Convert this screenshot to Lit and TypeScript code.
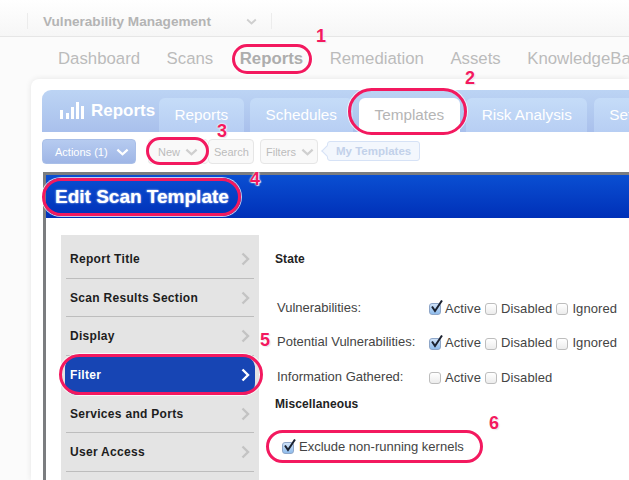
import { LitElement, html, css, svg } from 'lit';
import { customElement } from 'lit/decorators.js';

const NAV = ['Dashboard', 'Scans', 'Reports', 'Remediation', 'Assets', 'KnowledgeBase'];
const TABS = ['Reports', 'Schedules', 'Templates', 'Risk Analysis', 'Setup'];
const SIDE = ['Report Title', 'Scan Results Section', 'Display', 'Filter', 'Services and Ports', 'User Access'];
const STATES = [
  { label: 'Vulnerabilities:', opts: [['Active', true], ['Disabled', false], ['Ignored', false]] },
  { label: 'Potential Vulnerabilities:', opts: [['Active', true], ['Disabled', false], ['Ignored', false]] },
  { label: 'Information Gathered:', opts: [['Active', false], ['Disabled', false]] },
] as { label: string; opts: [string, boolean][] }[];

// annotation rings and numbers sit over the page, x/y taken from the screenshot
const RINGS = [
  [232, 44, 80, 30],
  [348, 88, 119, 47],
  [146, 137, 63, 28],
  [42, 178, 199, 38],
  [59, 354, 204, 41],
  [266, 430, 217, 33],
];
const NUMS = [
  ['1', 321, 36],
  ['2', 470, 78],
  ['3', 222, 131],
  ['4', 255, 179],
  ['5', 265, 340],
  ['6', 494, 423],
] as [string, number, number][];

const chevron = (cls: string) => html`<svg class=${cls} viewBox="0 0 14 8"><path d="M1.5 1.5 7 6.5l5.5-5" /></svg>`;
const arrow = () => html`<svg class="arrow" viewBox="0 0 9 14"><path d="M1.5 1.5 7 7l-5.5 5.5" /></svg>`;
const tick = svg`<path d="M3 6.5 6 11 13 0.5" />`;

const box = (on: boolean) => html`<span class="box ${on ? 'on' : ''}">
  ${on ? html`<svg viewBox="0 0 14 13">${tick}</svg>` : ''}
</span>`;

@customElement('app-root')
export class AppRoot extends LitElement {
  static styles = css`
    :host {
      display: block;
      position: relative;
      width: 629px;
      height: 480px;
      overflow: hidden;
      background: #fbfbfb;
      font-family: 'Liberation Sans', Arial, sans-serif;
    }
    .top {
      height: 37px;
      padding-top: 6px;
      box-sizing: border-box;
      display: flex;
      align-items: center;
      background: linear-gradient(#fff, #f6f6f6);
      border-bottom: 1px solid #e6e6e6;
    }
    .crumb {
      margin-left: 27px;
      width: 245px;
      height: 16px;
      box-sizing: border-box;
      display: flex;
      align-items: center;
      justify-content: space-between;
      padding: 0 14px 0 15px;
      border-left: 1px solid #ececec;
      border-right: 1px solid #ececec;
      color: #b4b4b4;
      font-size: 13.6px;
      font-weight: bold;
      white-space: nowrap;
    }
    .crumb-arrow {
      flex: none;
      width: 11px;
      height: 7px;
      fill: none;
      stroke: #cfcfcf;
      stroke-width: 2.4;
    }
    .nav {
      display: flex;
      gap: 26.5px;
      height: 42px;
      box-sizing: border-box;
      padding: 2px 0 0 58px;
      align-items: center;
      color: #bbb;
      font-size: 16.8px;
      white-space: nowrap;
    }
    .nav .sel {
      font-weight: bold;
      color: #adadad;
    }
    .card {
      margin-left: 31px;
      padding: 11px 0 0 11px;
      height: 401px;
      box-sizing: border-box;
      background: #fff;
      border-top-left-radius: 8px;
      box-shadow: 0 0 6px rgba(0, 0, 0, 0.09);
    }
    .head {
      height: 42px;
      box-sizing: border-box;
      display: flex;
      align-items: flex-end;
      background: linear-gradient(#bcd4f4, #a9c0ec);
      border-top-left-radius: 9px;
    }
    .brand {
      flex: none;
      width: 117px;
      height: 42px;
      box-sizing: border-box;
      padding: 11px 0 0 18px;
      display: flex;
      gap: 6px;
      color: #fff;
      font-size: 17px;
      font-weight: bold;
    }
    .brand svg {
      flex: none;
      width: 25px;
      height: 19px;
      fill: #fff;
    }
    .tabs {
      flex: none;
      display: flex;
      gap: 6.5px;
    }
    .tab {
      height: 34px;
      box-sizing: border-box;
      padding: 8px 15.5px 0;
      color: #fff;
      font-size: 15.3px;
      white-space: nowrap;
      background: linear-gradient(#c5dcf8, #b7cef3);
      border-radius: 6px 6px 0 0;
    }
    .tab.sel {
      background: #fff;
      color: #b5b5b5;
    }
    .tools {
      height: 40px;
      box-sizing: border-box;
      padding-top: 7px;
      display: flex;
      align-items: flex-start;
    }
    .btn {
      height: 25px;
      box-sizing: border-box;
      display: flex;
      align-items: center;
      gap: 5px;
      padding: 0 5px;
      border: 1px solid #e6e6e6;
      border-radius: 4px;
      background: #f9f9f9;
      color: #bcbcbc;
      font-size: 11px;
      white-space: nowrap;
    }
    .btn-arrow {
      flex: none;
      width: 13px;
      height: 8px;
      fill: none;
      stroke: #cfcfcf;
      stroke-width: 2.4;
    }
    .btn.primary {
      width: 94px;
      padding: 0 6px 0 12px;
      justify-content: space-between;
      margin-right: 12px;
      color: #fff;
      background: linear-gradient(#b6cbf0, #9fb6e6);
      border-color: #a9bfe8;
    }
    .btn.primary .btn-arrow {
      stroke: #fff;
    }
    .new {
      width: 60px;
      padding-left: 9px;
      border-right: 0;
    }
    .search {
      width: 46px;
      margin-right: 6px;
    }
    .filters {
      width: 58px;
      margin-right: 9px;
    }
    .tag {
      position: relative;
      height: 20px;
      box-sizing: border-box;
      padding: 0 8px;
      margin-top: 2px;
      display: flex;
      align-items: center;
      border: 1px solid #d6e2f6;
      border-radius: 3px;
      background: #f3f7fd;
      color: #c2d1ea;
      font-size: 11.5px;
      font-weight: bold;
      white-space: nowrap;
    }
    .tag::before {
      content: '';
      position: absolute;
      left: -5px;
      top: 5px;
      width: 7px;
      height: 7px;
      background: #f3f7fd;
      border-left: 1px solid #d6e2f6;
      border-bottom: 1px solid #d6e2f6;
      transform: rotate(45deg);
    }
    .dialog {
      margin-left: 1px;
      height: 320px;
      background: #fff;
      border: solid #7b7d80;
      border-width: 3px 0 0 3px;
    }
    .title {
      height: 43px;
      box-sizing: border-box;
      padding: 11px 0 0 9px;
      background: linear-gradient(#0a4fd2, #0030b8);
      color: #fff;
      font-size: 19px;
      font-weight: bold;
      text-shadow: 0 0 2px #dfe8ff;
    }
    .body {
      display: flex;
      padding: 17px 0 0 15px;
    }
    .side {
      flex: none;
      width: 198px;
      height: 260px;
      padding: 5px 5px 0;
      box-sizing: border-box;
      background: #e4e4e4;
    }
    .item {
      height: 38.7px;
      box-sizing: border-box;
      display: flex;
      align-items: center;
      justify-content: space-between;
      padding: 0 4px 0 4px;
      border-bottom: 1px solid #bdbdbd;
      color: #1d1d1d;
      font-size: 12px;
      font-weight: bold;
      letter-spacing: 0.3px;
    }
    .item.sel {
      margin: 0 -1px;
      padding: 0 5px 0 5px;
      background: #1745b4;
      color: #fff;
      border-bottom-color: #1745b4;
      border-radius: 12px;
    }
    .arrow {
      width: 9px;
      height: 14px;
      fill: none;
      stroke: #c3c3c3;
      stroke-width: 2.4;
    }
    .item.sel .arrow {
      stroke: #fff;
    }
    .form {
      padding: 17px 0 0 16px;
      color: #444;
      font-size: 13px;
      white-space: nowrap;
    }
    h4 {
      margin: 0;
      font-size: 12px;
      line-height: 14px;
      letter-spacing: 0.1px;
      color: #222;
    }
    .state {
      display: flex;
      flex-direction: column;
      gap: 18.5px;
      margin: 33.5px 0 12.5px;
    }
    .row {
      display: grid;
      grid-template-columns: 152px auto;
      padding-left: 2px;
      line-height: 15px;
    }
    .opts {
      display: flex;
      gap: 4px;
      margin-top: 1px;
      letter-spacing: 0.1px;
    }
    .opt {
      display: flex;
      align-items: center;
      gap: 4px;
    }
    .box {
      position: relative;
      flex: none;
      width: 12px;
      height: 12px;
      margin-top: 2px;
      border: 1px solid #bdbdbd;
      border-radius: 3px;
      box-sizing: border-box;
      background: linear-gradient(#fff, #ececec);
    }
    .box.on {
      border-color: #8ea6c8;
      background: linear-gradient(#cfe2f8, #8fbcec);
    }
    .box svg {
      position: absolute;
      left: -1px;
      top: -4px;
      width: 14px;
      height: 13px;
      fill: none;
      stroke: #1b2230;
      stroke-width: 2;
    }
    .exclude {
      display: flex;
      align-items: center;
      gap: 5px;
      margin: 28px 0 0 7px;
    }
    .ring {
      position: absolute;
      box-sizing: border-box;
      border: 3px solid #f3195f;
      border-radius: 999px;
      box-shadow: 0 0 0 1px rgba(255, 255, 255, 0.75);
    }
    .num {
      position: absolute;
      transform: translate(-50%, -50%);
      color: #f3195f;
      font-size: 18px;
      line-height: 1;
      font-weight: bold;
      text-shadow: 0 0 2px #fff, 0 0 2px #fff, 1px 1px 1px #ddd;
    }
  `;

  render() {
    return html`
      <div class="top">
        <div class="crumb">Vulnerability Management ${chevron('crumb-arrow')}</div>
      </div>
      <div class="nav">
        ${NAV.map((n) => html`<span class=${n === 'Reports' ? 'sel' : ''}>${n}</span>`)}
      </div>
      <div class="card">
        <div class="head">
          <div class="brand">
            <svg viewBox="0 0 25 19">
              <rect x="0" y="9" width="3" height="9" />
              <rect x="6" y="12" width="3" height="6" />
              <rect x="11" y="6" width="3" height="12" />
              <rect x="16" y="1" width="3" height="17" />
              <rect x="21" y="5" width="3" height="13" />
            </svg>
            <span>Reports</span>
          </div>
          <div class="tabs">
            ${TABS.map((t) => html`<div class="tab ${t === 'Templates' ? 'sel' : ''}">${t}</div>`)}
          </div>
        </div>
        <div class="tools">
          <div class="btn primary">Actions (1) ${chevron('btn-arrow')}</div>
          <div class="btn new">New ${chevron('btn-arrow')}</div>
          <div class="btn search">Search</div>
          <div class="btn filters">Filters ${chevron('btn-arrow')}</div>
          <div class="tag">My Templates</div>
        </div>
        <div class="dialog">
          <div class="title">Edit Scan Template</div>
          <div class="body">
            <div class="side">
              ${SIDE.map(
                (s) => html`<div class="item ${s === 'Filter' ? 'sel' : ''}"><span>${s}</span>${arrow()}</div>`,
              )}
            </div>
            <div class="form">
              <h4>State</h4>
              <div class="state">
                ${STATES.map(
                  (r) => html`<div class="row">
                    <span>${r.label}</span>
                    <div class="opts">
                      ${r.opts.map(([o, on]) => html`<span class="opt">${box(on)}${o}</span>`)}
                    </div>
                  </div>`,
                )}
              </div>
              <h4>Miscellaneous</h4>
              <div class="exclude">${box(true)}Exclude non-running kernels</div>
            </div>
          </div>
        </div>
      </div>
      ${RINGS.map(
        ([x, y, w, h]) => html`<div class="ring" style="left:${x}px;top:${y}px;width:${w}px;height:${h}px"></div>`,
      )}
      ${NUMS.map(([n, x, y]) => html`<div class="num" style="left:${x}px;top:${y}px">${n}</div>`)}
    `;
  }
}
